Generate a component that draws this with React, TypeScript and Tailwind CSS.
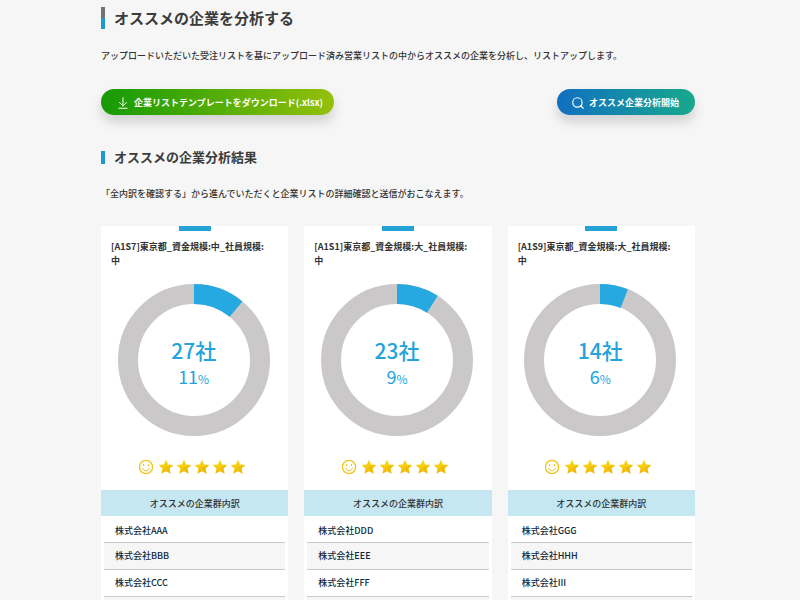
import { ArrowDownToLine, Search } from "lucide-react";

const groups = [
  {
    title: "[A1S7]東京都_資金規模:中_社員規模:中",
    count: 27,
    percent: 11,
    companies: ["株式会社AAA", "株式会社BBB", "株式会社CCC"],
  },
  {
    title: "[A1S1]東京都_資金規模:大_社員規模:中",
    count: 23,
    percent: 9,
    companies: ["株式会社DDD", "株式会社EEE", "株式会社FFF"],
  },
  {
    title: "[A1S9]東京都_資金規模:大_社員規模:中",
    count: 14,
    percent: 6,
    companies: ["株式会社GGG", "株式会社HHH", "株式会社III"],
  },
];

type Group = (typeof groups)[number];

function Donut({ count, percent }: { count: number; percent: number }) {
  return (
    <div className="relative mx-auto w-[152px]">
      <svg viewBox="0 0 152 152" className="block w-full -rotate-90" fill="none" strokeWidth="20">
        <circle cx="76" cy="76" r="66" stroke="#cac8c9" />
        <circle
          cx="76"
          cy="76"
          r="66"
          stroke="#25a9e0"
          pathLength="100"
          strokeDasharray={`${percent} 100`}
        />
      </svg>
      <div className="absolute inset-0 flex flex-col items-center justify-center pt-2 text-[#25a3dc]">
        <span className="text-[21px] leading-[26px] font-medium">{count}社</span>
        <span className="text-[18px] leading-[26px]">
          {percent}
          <span className="text-[12px]">%</span>
        </span>
      </div>
    </div>
  );
}

function Smile() {
  return (
    <svg viewBox="0 0 16 16" className="mr-[2px] size-4" fill="none" stroke="#f0c419" strokeLinecap="round">
      <circle cx="8" cy="8" r="6.6" strokeWidth="1.3" />
      <path d="M4.6 9.2c.6 1.7 1.9 2.6 3.4 2.6s2.8-.9 3.4-2.6" strokeWidth="1" />
      <path d="M5.6 5.6v.8M10.4 5.6v.8" strokeWidth="1.3" />
    </svg>
  );
}

function Star() {
  return (
    <svg viewBox="0 0 16 16" className="size-4">
      <path
        d="M8 .8l2.2 4.7 5.1.6-3.8 3.5 1.1 5.2L8 12.2l-4.6 2.6 1.1-5.2L.7 6.100l5.1-.6z"
        fill="url(#starFill)"
      />
      <path d="M8 8.3l7.3-2.2-3.8 3.5 1.1 5.2z" fill="#e9b200" opacity="0.5" />
      <path d="M8 8.3L5.8 5.5.7 6.1zM8 8.3V.8l2.2 4.7z" fill="#ffe640" opacity="0.3" />
    </svg>
  );
}

function GroupCard({ group }: { group: Group }) {
  return (
    <article className="flex flex-col bg-white">
      <div className="mx-auto h-[5px] w-8 bg-[#25a3d8]" />
      <h3 className="pt-[9px] pr-4 pl-[10px] text-[9px] leading-[14px] font-bold text-[#333]">{group.title}</h3>
      <div className="pt-4 pr-[2px]">
        <Donut count={group.count} percent={group.percent} />
      </div>
      <div className="flex h-[54px] items-center justify-center gap-[2px] pt-2 pr-[6px]" role="img" aria-label="5つ星">
        <Smile />
        {[1, 2, 3, 4, 5].map((n) => (
          <Star key={n} />
        ))}
      </div>
      <h4 className="bg-[#c4e7f2] pt-px text-center text-[9px] leading-[25px] font-medium text-[#333]">
        オススメの企業群内訳
      </h4>
      <ul className="mx-[3px] text-[9px] leading-[26px] font-medium text-[#0d2a3c]">
        {group.companies.map((name) => (
          <li
            key={name}
            className="border-b border-[#c9c9c9] pl-[11px] first:pt-1 first:leading-[22px] even:bg-[#f6f6f6]"
          >
            {name}
          </li>
        ))}
      </ul>
      <div className="mx-[3px] grow bg-[#f6f6f6]" />
    </article>
  );
}

export default function App() {
  return (
    <main className="flex min-h-screen flex-col bg-[#f6f6f6] pt-[7px] pr-[105px] pl-[101px] font-['Noto_Sans_CJK_JP',sans-serif] text-[#333]">
      <svg className="absolute size-0" aria-hidden="true">
        <defs>
          <linearGradient id="starFill" x1="0" y1="0" x2="0" y2="1">
            <stop offset="0" stopColor="#f8d90f" />
            <stop offset="1" stopColor="#f2b705" />
          </linearGradient>
        </defs>
      </svg>

      <div className="flex items-center gap-[9px]">
        <div className="flex h-[22px] w-1 flex-col">
          <div className="h-[11px] bg-[#727272]" />
          <div className="h-[11px] bg-[#1e9bcd]" />
        </div>
        <h1 className="text-[15px] leading-[22px] font-bold text-[#3c3c3c]">オススメの企業を分析する</h1>
      </div>

      <p className="mt-5 text-[9px] leading-[14px] font-medium">
        アップロードいただいた受注リストを基にアップロード済み営業リストの中からオススメの企業を分析し、リストアップします。
      </p>

      <div className="mt-[26px] flex items-center justify-between">
        <button className="flex h-[26px] items-center gap-1 rounded-full bg-linear-to-r/srgb from-[#159a06] to-[#94c00a] pt-px pr-[11px] pl-[15px] text-[9px] font-bold text-white shadow-[0_7px_12px_rgba(0,0,0,0.15)]">
          <ArrowDownToLine size={14} strokeWidth={1.7} />
          企業リストテンプレートをダウンロード(.xlsx)
        </button>
        <button className="flex h-[26px] items-center gap-1 rounded-full bg-linear-to-r/srgb from-[#116fc1] to-[#18a88c] pt-px pr-4 pl-[14px] text-[9px] font-bold text-white shadow-[0_7px_12px_rgba(0,0,0,0.15)]">
          <Search size={14} strokeWidth={2} />
          オススメ企業分析開始
        </button>
      </div>

      <div className="mt-8 flex items-center gap-[9px]">
        <div className="h-[13px] w-1 bg-[#1e9bcd]" />
        <h2 className="text-[13px] leading-[20px] font-bold text-[#3c3c3c]">オススメの企業分析結果</h2>
      </div>

      <p className="mt-5 text-[9px] leading-[14px] font-medium">
        「全内訳を確認する」から進んでいただくと企業リストの詳細確認と送信がおこなえます。
      </p>

      <section className="mt-[25px] grid grow grid-cols-3 gap-4">
        {groups.map((group) => (
          <GroupCard key={group.title} group={group} />
        ))}
      </section>
    </main>
  );
}
